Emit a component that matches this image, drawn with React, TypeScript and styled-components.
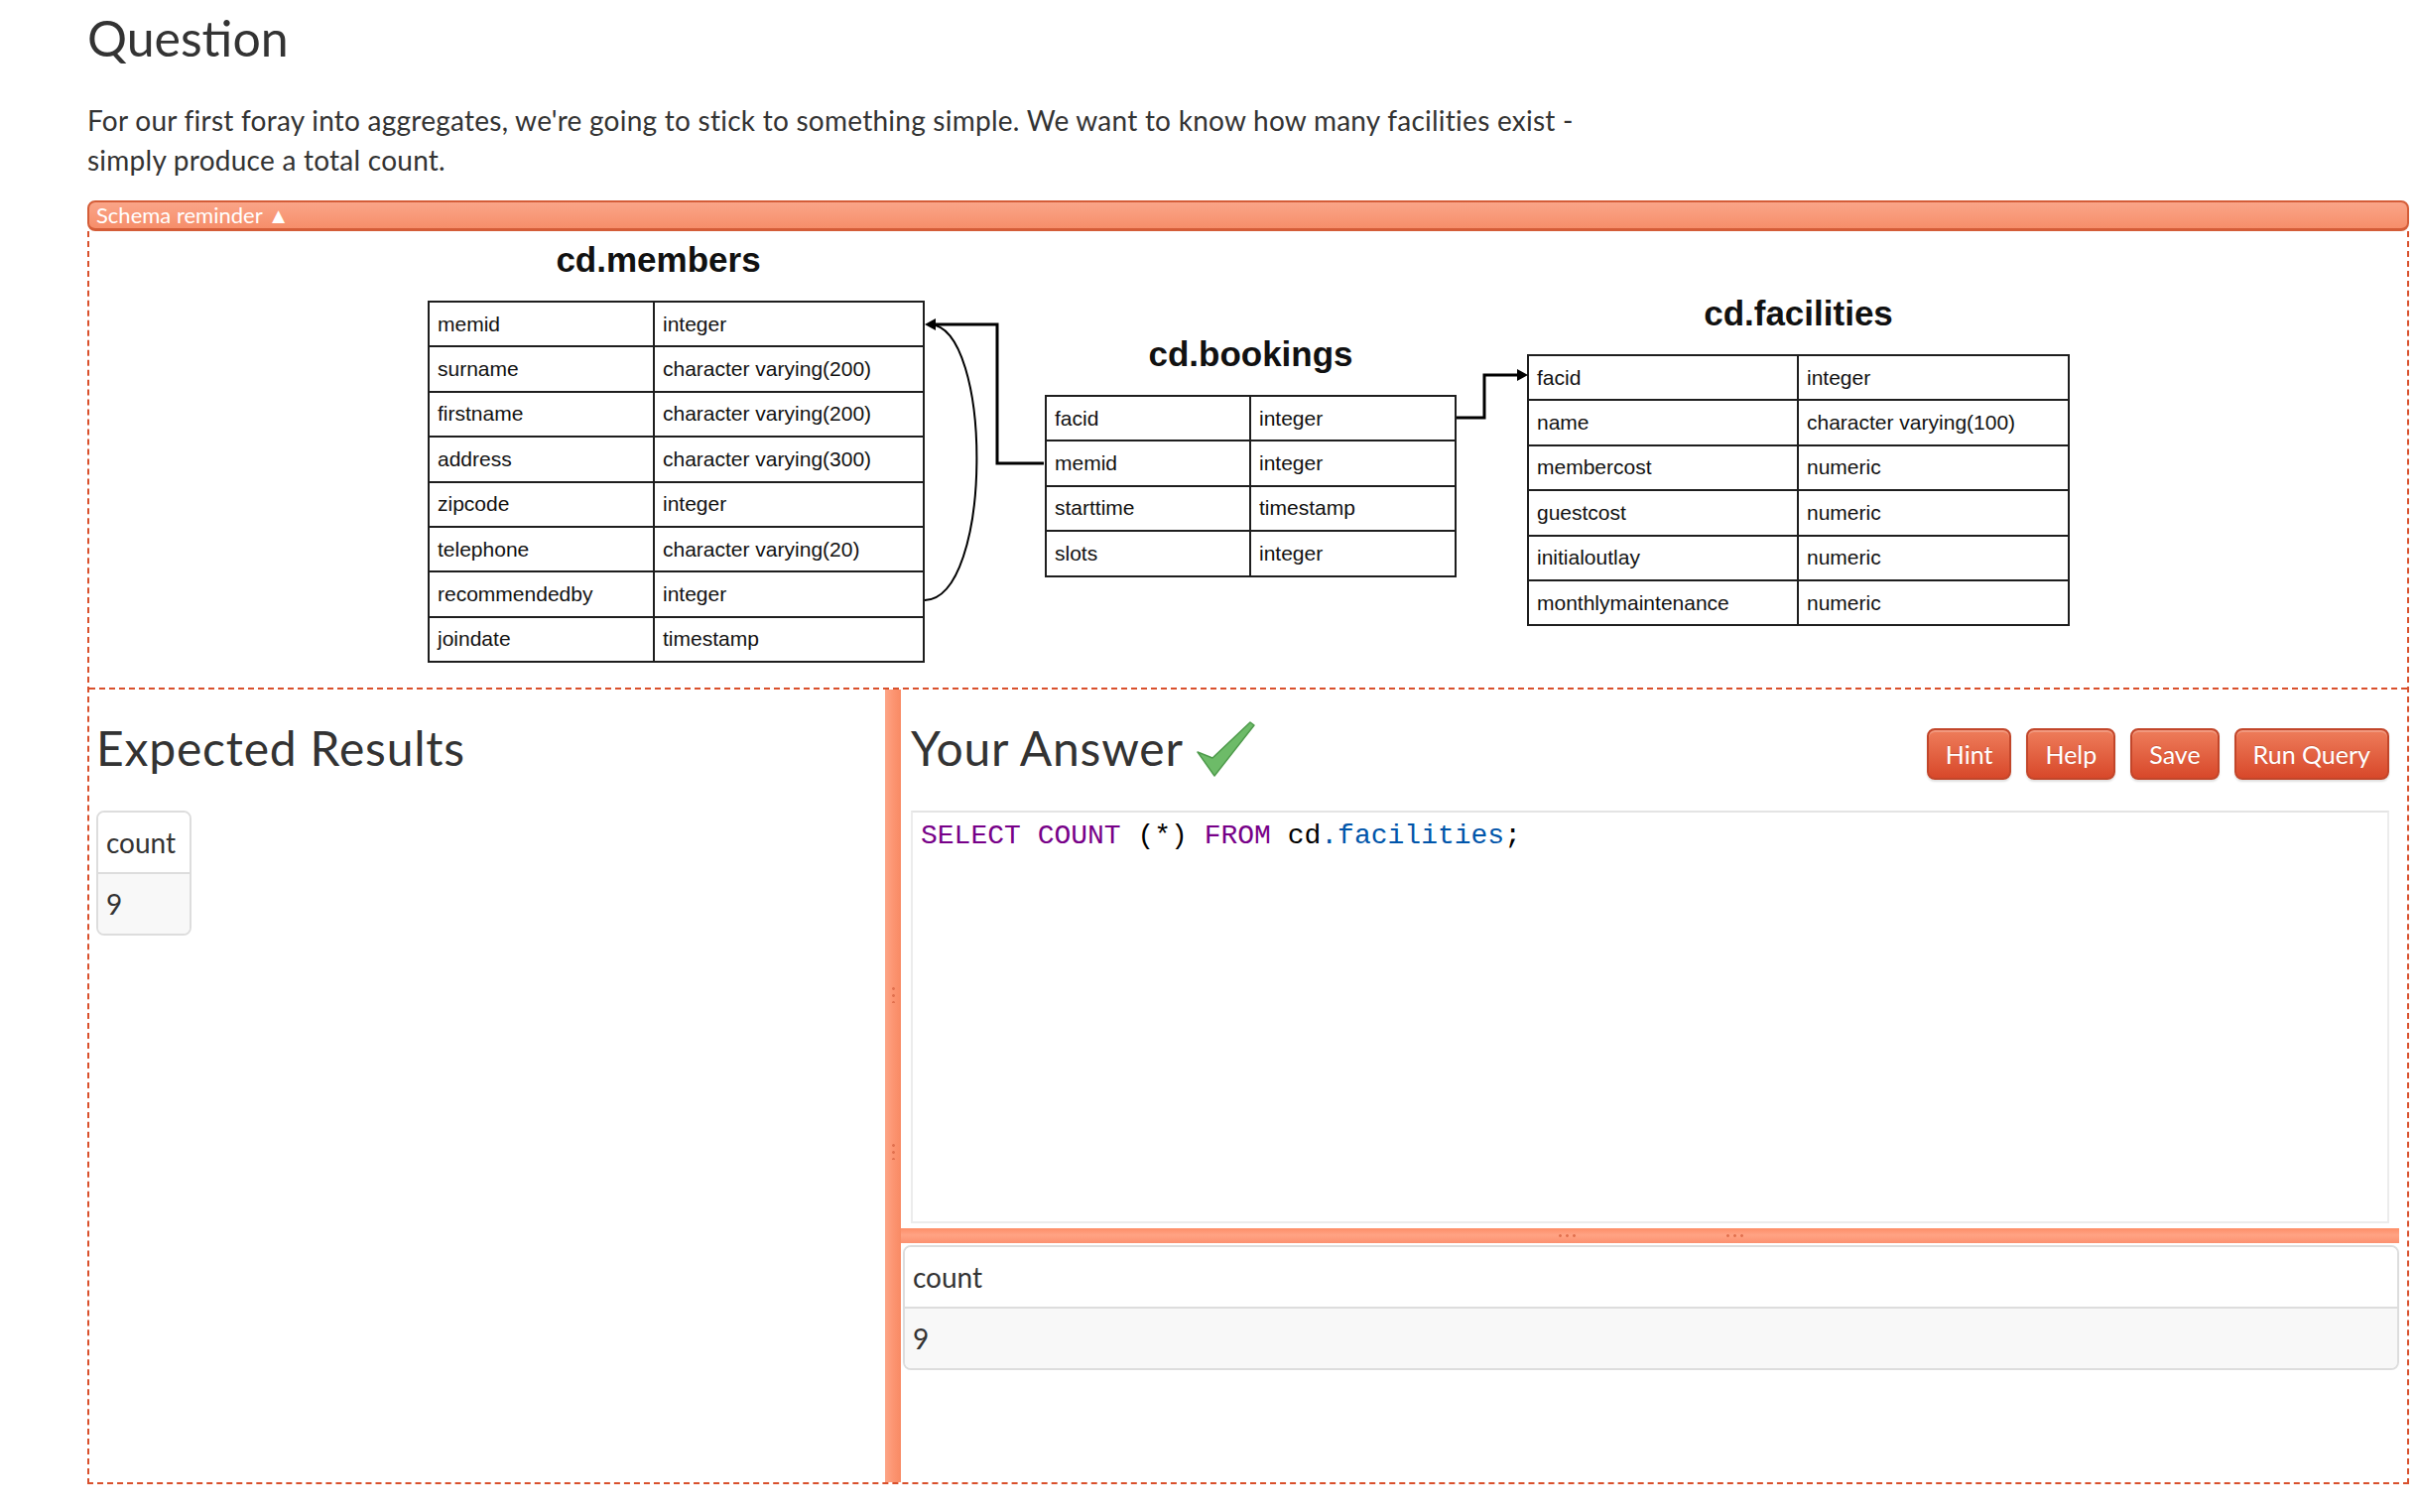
import styled, { createGlobalStyle } from 'styled-components';

const GlobalStyle = createGlobalStyle`
  html, body {
    margin: 0;
    padding: 0;
    background: #ffffff;
  }
  body {
    font-family: Lato, "Open Sans", "Liberation Sans", sans-serif;
    color: #333333;
  }
`;

type Field = [string, string];

const membersFields: Field[] = [
  ['memid', 'integer'],
  ['surname', 'character varying(200)'],
  ['firstname', 'character varying(200)'],
  ['address', 'character varying(300)'],
  ['zipcode', 'integer'],
  ['telephone', 'character varying(20)'],
  ['recommendedby', 'integer'],
  ['joindate', 'timestamp'],
];

const bookingsFields: Field[] = [
  ['facid', 'integer'],
  ['memid', 'integer'],
  ['starttime', 'timestamp'],
  ['slots', 'integer'],
];

const facilitiesFields: Field[] = [
  ['facid', 'integer'],
  ['name', 'character varying(100)'],
  ['membercost', 'numeric'],
  ['guestcost', 'numeric'],
  ['initialoutlay', 'numeric'],
  ['monthlymaintenance', 'numeric'],
];

const buttons = ['Hint', 'Help', 'Save', 'Run Query'];

export default function App() {
  return (
    <>
      <GlobalStyle />
      <Page>
        <Title>Question</Title>
        <Prompt>
          For our first foray into aggregates, we're going to stick to something simple. We want to
          know how many facilities exist - simply produce a total count.
        </Prompt>
        <SchemaToggle>Schema reminder ▲</SchemaToggle>
        <Workspace>
          <SchemaArea>
            <Diagram>
              <TableNode $left={10} $top={9}>
                <TableTitle $offset={-36}>cd.members</TableTitle>
                <FieldGrid $cols="225px 270px">
                  {membersFields.map(([name, type]) => (
                    <FieldRow key={name}>
                      <FieldCell>{name}</FieldCell>
                      <FieldCell>{type}</FieldCell>
                    </FieldRow>
                  ))}
                </FieldGrid>
              </TableNode>
              <TableNode $left={632} $top={104}>
                <TableTitle>cd.bookings</TableTitle>
                <FieldGrid $cols="204px 205px">
                  {bookingsFields.map(([name, type]) => (
                    <FieldRow key={name}>
                      <FieldCell>{name}</FieldCell>
                      <FieldCell>{type}</FieldCell>
                    </FieldRow>
                  ))}
                </FieldGrid>
              </TableNode>
              <TableNode $left={1118} $top={63}>
                <TableTitle>cd.facilities</TableTitle>
                <FieldGrid $cols="270px 271px">
                  {facilitiesFields.map(([name, type]) => (
                    <FieldRow key={name}>
                      <FieldCell>{name}</FieldCell>
                      <FieldCell>{type}</FieldCell>
                    </FieldRow>
                  ))}
                </FieldGrid>
              </TableNode>
              <Connectors viewBox="0 0 1674 462" width={1674} height={462}>
                <path d="M1047 188 H1075 V145 H1110" fill="none" stroke="#000" strokeWidth={3} />
                <polygon points="1119,145 1108,139 1108,151" fill="#000" />
                <path d="M631 234 H584 V94 H520" fill="none" stroke="#000" strokeWidth={3} />
                <polygon points="511,94 522,88 522,100" fill="#000" />
                <path d="M511 372 C580 370, 580 96, 516 94" fill="none" stroke="#000" strokeWidth={2} />
              </Connectors>
            </Diagram>
          </SchemaArea>
          <Panels>
            <ExpectedPane>
              <PaneHeading>Expected Results</PaneHeading>
              <ResultTable $compact>
                <ResultHead>count</ResultHead>
                <ResultCell>9</ResultCell>
              </ResultTable>
            </ExpectedPane>
            <VSplitter>
              <GripColumn />
              <GripColumn />
            </VSplitter>
            <AnswerPane>
              <AnswerHeader>
                <PaneHeading>Your Answer</PaneHeading>
                <CheckMark viewBox="0 0 64 60" width={64} height={60}>
                  <polygon
                    points="3,33 18,39 56,3 60,6 20,57"
                    fill="#6dbb68"
                    stroke="#4f9b4c"
                    strokeWidth={1.5}
                    strokeLinejoin="round"
                  />
                </CheckMark>
                <ButtonBar>
                  {buttons.map(label => (
                    <ActionButton key={label}>{label}</ActionButton>
                  ))}
                </ButtonBar>
              </AnswerHeader>
              <Editor>
                <CodeLine>
                  <Keyword>SELECT</Keyword> <Keyword>COUNT</Keyword> (*) <Keyword>FROM</Keyword> cd
                  <Property>.facilities</Property>;
                </CodeLine>
              </Editor>
              <HSplitter>
                <GripRow />
                <GripRow />
              </HSplitter>
              <ResultTable>
                <ResultHead>count</ResultHead>
                <ResultCell>9</ResultCell>
              </ResultTable>
            </AnswerPane>
          </Panels>
        </Workspace>
      </Page>
    </>
  );
}

const Page = styled.main`
  padding: 11px 10px 28px 88px;
`;

const Title = styled.h1`
  margin: 0;
  font-size: 50px;
  line-height: 55px;
  font-weight: 400;
  color: #333;
`;

const Prompt = styled.p`
  margin: 35px 0 21px;
  max-width: 1545px;
  font-size: 28px;
  line-height: 40px;
  letter-spacing: 0.25px;
  color: #333;
`;

const SchemaToggle = styled.div`
  height: 26px;
  padding-left: 7px;
  border: 2px solid #d45d38;
  border-bottom-width: 3px;
  border-radius: 8px;
  background: linear-gradient(#faa588, #f68e6a);
  color: #fff;
  font-size: 22px;
  line-height: 26px;
`;

const Workspace = styled.section`
  border: 2px dashed #d9502c;
  border-top: none;
`;

const SchemaArea = styled.div`
  height: 460px;
  border-bottom: 2px dashed #d9502c;
`;

const Diagram = styled.div`
  position: relative;
  width: 1674px;
  height: 462px;
  margin: 0 auto;
  font-family: "Liberation Sans", Arial, sans-serif;
  color: #111;
`;

const TableNode = styled.div<{ $left: number; $top: number }>`
  position: absolute;
  left: ${({ $left }) => $left}px;
  top: ${({ $top }) => $top}px;
  display: flex;
  flex-direction: column;
`;

const TableTitle = styled.div<{ $offset?: number }>`
  height: 40px;
  margin-bottom: 21px;
  padding-right: ${({ $offset }) => ($offset ? -$offset : 0)}px;
  text-align: center;
  font-size: 35px;
  line-height: 40px;
  font-weight: 700;
`;

const FieldGrid = styled.div<{ $cols: string }>`
  display: grid;
  grid-template-columns: ${({ $cols }) => $cols};
  grid-auto-rows: 43.4px;
  gap: 2px;
  padding: 2px;
  background: #1e1e1e;
`;

const FieldRow = styled.div`
  display: contents;
`;

const FieldCell = styled.div`
  display: flex;
  align-items: center;
  padding-left: 8px;
  background: #fff;
  font-size: 21px;
`;

const Connectors = styled.svg`
  position: absolute;
  left: 0;
  top: 0;
  pointer-events: none;
`;

const Panels = styled.div`
  display: grid;
  grid-template-columns: 802px 16px 1fr;
  height: 799px;
`;

const ExpectedPane = styled.div`
  padding: 32px 0 0 7px;
`;

const PaneHeading = styled.h2`
  margin: 0;
  font-size: 48px;
  line-height: 53px;
  letter-spacing: 0.8px;
  font-weight: 400;
  color: #333;
`;

const ResultTable = styled.div<{ $compact?: boolean }>`
  display: grid;
  width: ${({ $compact }) => ($compact ? '96px' : 'auto')};
  margin: ${({ $compact }) => ($compact ? '37px 0 0 0' : '2px 8px 0 2px')};
  border: 2px solid #dddddd;
  border-radius: 8px;
  overflow: hidden;
  box-sizing: border-box;
`;

const ResultHead = styled.div`
  height: 60px;
  padding-left: 8px;
  background: #fff;
  border-bottom: 2px solid #dddddd;
  font-size: 28px;
  line-height: 60px;
  color: #333;
`;

const ResultCell = styled.div`
  height: 60px;
  padding-left: 8px;
  background: #f8f8f8;
  font-size: 28px;
  line-height: 60px;
  color: #333;
`;

const VSplitter = styled.div`
  display: flex;
  flex-direction: column;
  align-items: center;
  padding-top: 298px;
  gap: 140px;
  background: linear-gradient(90deg, #fda587, #fc9572 50%, #f88a64);
`;

const GripColumn = styled.span`
  width: 3px;
  height: 18px;
  background: radial-gradient(circle, #e2714f 1.2px, transparent 1.6px) 0 0 / 3px 7px repeat-y;
`;

const AnswerPane = styled.div`
  display: flex;
  flex-direction: column;
  padding-top: 32px;
`;

const AnswerHeader = styled.div`
  display: flex;
  align-items: flex-start;
  height: 53px;
  padding: 0 18px 0 10px;
`;

const CheckMark = styled.svg`
  margin: -2px 0 0 11px;
`;

const ButtonBar = styled.div`
  display: flex;
  gap: 15px;
  margin: 7px 0 0 auto;
`;

const ActionButton = styled.button`
  height: 52px;
  padding: 0 17px;
  border: 2px solid #c2462a;
  border-radius: 8px;
  background: linear-gradient(#ee7d5b, #d8482a);
  box-shadow: inset 0 2px 0 rgba(255, 255, 255, 0.22), 0 2px 2px rgba(0, 0, 0, 0.12);
  color: #fff;
  font-family: Lato, "Open Sans", sans-serif;
  font-size: 25px;
  text-shadow: 0 -1px 0 rgba(0, 0, 0, 0.15);
  cursor: pointer;
`;

const Editor = styled.div`
  height: 416px;
  margin: 37px 18px 0 10px;
  padding: 8px 8px 0;
  border: 2px solid #ececec;
  border-top-color: #e4e4e4;
  box-sizing: border-box;
  background: #fff;
`;

const CodeLine = styled.pre`
  margin: 0;
  font-family: "Liberation Mono", "Courier New", monospace;
  font-size: 28px;
  line-height: 32px;
  color: #000;
`;

const Keyword = styled.span`
  color: #770088;
`;

const Property = styled.span`
  color: #0055aa;
`;

const HSplitter = styled.div`
  display: flex;
  justify-content: center;
  align-items: center;
  gap: 150px;
  height: 15px;
  margin: 5px 8px 0 0;
  background: linear-gradient(#fd8e68, #ffa384 45%, #fc9170);
`;

const GripRow = styled.span`
  width: 19px;
  height: 3px;
  background: radial-gradient(circle, #e2714f 1.2px, transparent 1.6px) 0 0 / 7px 3px repeat-x;
`;
